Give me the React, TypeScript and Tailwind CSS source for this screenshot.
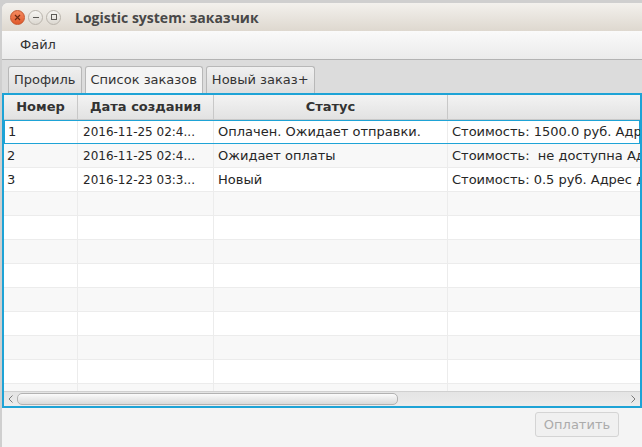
import React from 'react';

// --- Data ---
const columns = [
  { title: 'Номер', width: 74 },
  { title: 'Дата создания', width: 136 },
  { title: 'Статус', width: 234 },
  { title: '', width: 320 },
];

const rows: string[][] = [
  ['1', '2016-11-25 02:4...', 'Оплачен. Ожидает отправки.', 'Стоимость: 1500.0 руб. Адрес доставки'],
  ['2', '2016-11-25 02:4...', 'Ожидает оплаты', 'Стоимость:  не доступна Адрес доставки'],
  ['3', '2016-12-23 03:3...', 'Новый', 'Стоимость: 0.5 руб. Адрес доставки'],
];

const emptyRows = 9;

const font = { fontFamily: '"DejaVu Sans", "Noto Sans", sans-serif' };

// --- Sub-Components ---
const WindowButton = ({ kind }: { kind: 'close' | 'min' | 'max' }) => {
  if (kind === 'close') {
    return (
      <div className="w-[15px] h-[15px] rounded-full bg-gradient-to-b from-[#f58a5f] to-[#e0582a] border border-[#c4562e] flex items-center justify-center">
        <svg width="7" height="7" viewBox="0 0 7 7">
          <path d="M1 1 L6 6 M6 1 L1 6" stroke="#6b2a12" strokeWidth="1.2" />
        </svg>
      </div>
    );
  }
  return (
    <div className="w-[15px] h-[15px] rounded-full bg-gradient-to-b from-[#f7f6f3] to-[#dcd8d1] border border-[#b9b4ac] flex items-center justify-center">
      <svg width="8" height="8" viewBox="0 0 8 8">
        {kind === 'min' ? (
          <path d="M1 4.5 H7" stroke="#5c5a56" strokeWidth="1" />
        ) : (
          <rect x="1.5" y="1.5" width="5" height="5" fill="none" stroke="#5c5a56" strokeWidth="1" />
        )}
      </svg>
    </div>
  );
};

const Tab = ({ label, active }: { label: string; active?: boolean }) => (
  <div
    className={
      'h-[27px] px-[5px] flex items-center rounded-t-[3px] border border-b-0 border-[#b8b8b8] text-[13px] text-[#333] ' +
      (active ? 'bg-[#f4f4f4]' : 'bg-gradient-to-b from-[#f0f0f0] to-[#dedede]')
    }
  >
    {label}
  </div>
);

export default function App() {
  return (
    <div className="w-[642px] h-[447px] overflow-hidden bg-[#cfcfcf] pt-[3px] pl-[2px]" style={font}>
      <div className="h-full flex flex-col rounded-tl-[6px] overflow-hidden bg-[#f4f4f4]">
        {/* title bar */}
        <div className="h-[28px] shrink-0 flex items-center bg-gradient-to-b from-[#f3f1ed] to-[#ded8cf] pl-[8px]">
          <div className="flex items-center gap-[3px]">
            <WindowButton kind="close" />
            <WindowButton kind="min" />
            <WindowButton kind="max" />
          </div>
          <span
            className="ml-[14px] text-[14px] font-bold text-[#484848]"
            style={{ fontFamily: '"Open Sans", "Noto Sans", sans-serif' }}
          >
            Logistic system: заказчик
          </span>
        </div>

        {/* menu bar */}
        <div className="h-[29px] shrink-0 flex items-center bg-gradient-to-b from-[#fafafa] to-[#ebebeb] border-b border-[#b3b3b3]">
          <span className="ml-[18px] text-[13px] text-[#333]">Файл</span>
        </div>

        {/* tabs */}
        <div className="h-[33px] shrink-0 bg-[#dcdcdc] flex items-end gap-[3px] pl-[6px]">
          <Tab label="Профиль" />
          <Tab label="Список заказов" active />
          <Tab label="Новый заказ+" />
        </div>

        {/* table */}
        <div className="flex-1 min-h-0 flex flex-col border-2 border-[#1ea3d6] bg-white">
          <div className="flex-1 min-h-0 overflow-hidden">
            <div className="flex h-[25px] bg-gradient-to-b from-[#f3f3f3] to-[#e2e2e2] border-b border-[#c8c8c8]">
              {columns.map((c, i) => (
                <div
                  key={i}
                  className="shrink-0 flex items-center justify-center border-r border-[#c8c8c8] text-[13px] font-bold text-[#333]"
                  style={{ width: c.width }}
                >
                  {c.title}
                </div>
              ))}
            </div>
            {[...rows, ...new Array(emptyRows).fill(['', '', '', ''])].map((r: string[], ri) => (
              <div
                key={ri}
                className={
                  'flex h-[24px] ' +
                  (ri === 0
                    ? 'bg-white border border-[#1ea3d6]'
                    : ri % 2 === 1
                    ? 'bg-[#f8f8f8]'
                    : 'bg-white')
                }
              >
                {columns.map((c, ci) => (
                  <div
                    key={ci}
                    className={
                      'shrink-0 flex items-center whitespace-pre overflow-hidden text-[#262626] border-r border-[#ececec] ' +
                      (ci === 0 ? 'pl-[3px] text-[13px] ' : ci === 1 ? 'pl-[5px] text-[12px] ' : 'pl-[4px] text-[13px] ') +
                      (ri === 0 ? '' : 'border-b border-b-[#ececec]')
                    }
                    style={{ width: ri === 0 && ci === 0 ? c.width - 1 : c.width }}
                  >
                    {r[ci]}
                  </div>
                ))}
              </div>
            ))}
          </div>

          {/* horizontal scrollbar */}
          <div className="h-[15px] shrink-0 flex items-center bg-gradient-to-b from-[#e4e4e4] to-[#ececec] border-t border-[#d0d0d0]">
            <svg width="12" height="12" viewBox="0 0 12 12" className="ml-[1px] shrink-0">
              <path d="M7.5 2.5 L4 6 L7.5 9.5" fill="none" stroke="#7a7a7a" strokeWidth="1" />
            </svg>
            <div className="w-[381px] h-[12px] rounded-[5px] border border-[#b2b2b2] bg-gradient-to-b from-[#fbfbfb] to-[#dadada]" />
            <div className="flex-1" />
            <svg width="12" height="12" viewBox="0 0 12 12" className="mr-[1px] shrink-0">
              <path d="M4.5 2.5 L8 6 L4.5 9.5" fill="none" stroke="#7a7a7a" strokeWidth="1" />
            </svg>
          </div>
        </div>

        {/* bottom bar */}
        <div className="h-[39px] shrink-0 flex items-start justify-end pt-[4px] pr-[23px]">
          <div className="w-[84px] h-[25px] flex items-center justify-center rounded-[3px] border border-[#d4d4d4] bg-[#f0f0f0] text-[13px] text-[#ababab]">
            Оплатить
          </div>
        </div>
      </div>
    </div>
  );
}
